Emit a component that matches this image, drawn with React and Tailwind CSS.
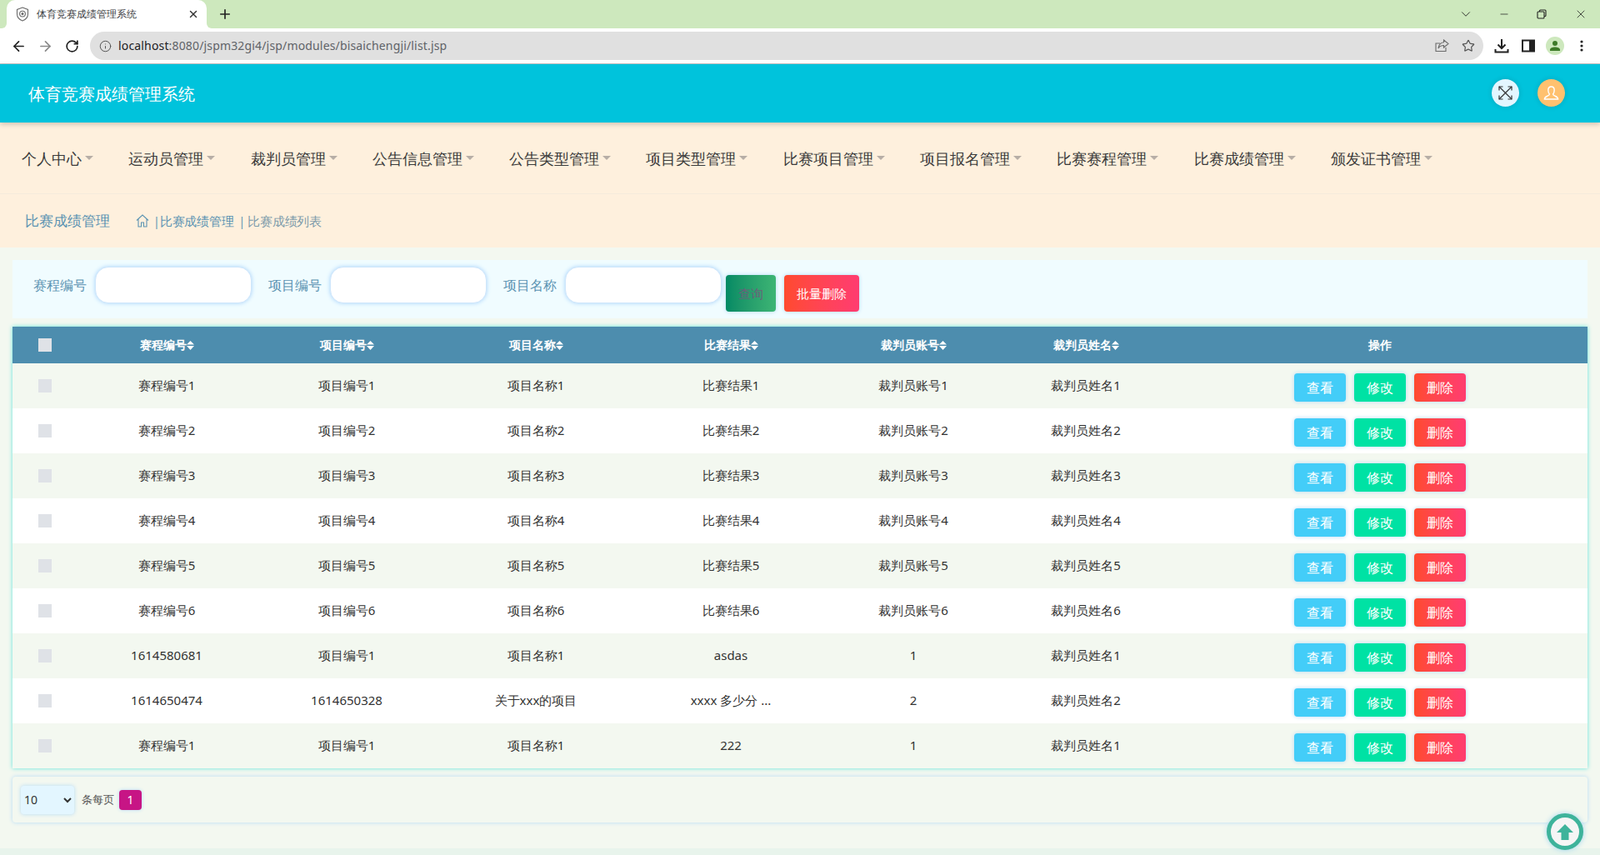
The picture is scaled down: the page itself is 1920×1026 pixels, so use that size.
import React from 'react';
import { ArrowLeft, ArrowRight, RotateCw, Info, Star, Plus, X, ChevronDown, Minus } from 'lucide-react';

const navItems = ['个人中心', '运动员管理', '裁判员管理', '公告信息管理', '公告类型管理', '项目类型管理', '比赛项目管理', '项目报名管理', '比赛赛程管理', '比赛成绩管理', '颁发证书管理'];
const heads = ['赛程编号', '项目编号', '项目名称', '比赛结果', '裁判员账号', '裁判员姓名'];
const rows = [
  ['赛程编号1', '项目编号1', '项目名称1', '比赛结果1', '裁判员账号1', '裁判员姓名1'],
  ['赛程编号2', '项目编号2', '项目名称2', '比赛结果2', '裁判员账号2', '裁判员姓名2'],
  ['赛程编号3', '项目编号3', '项目名称3', '比赛结果3', '裁判员账号3', '裁判员姓名3'],
  ['赛程编号4', '项目编号4', '项目名称4', '比赛结果4', '裁判员账号4', '裁判员姓名4'],
  ['赛程编号5', '项目编号5', '项目名称5', '比赛结果5', '裁判员账号5', '裁判员姓名5'],
  ['赛程编号6', '项目编号6', '项目名称6', '比赛结果6', '裁判员账号6', '裁判员姓名6'],
  ['1614580681', '项目编号1', '项目名称1', 'asdas', '1', '裁判员姓名1'],
  ['1614650474', '1614650328', '关于xxx的项目', 'xxxx 多少分 ...', '2', '裁判员姓名2'],
  ['赛程编号1', '项目编号1', '项目名称1', '222', '1', '裁判员姓名1'],
];

function Sort() {
  return (
    <svg width="9" height="11" viewBox="0 0 9 11" className="inline-block align-[-1px]">
      <polygon points="4.5,0 9,4.6 0,4.6" fill="#fff" />
      <polygon points="0,6 9,6 4.5,11" fill="#fff" />
    </svg>
  );
}

function Field({ label, className }) {
  return (
    <div className={`flex items-start ${className}`}>
      <span className="mr-[10px] text-[16px] leading-[44px] text-[#5b93b2]">{label}</span>
      <input className="h-[44px] w-[188px] rounded-[16px] border border-[#cfe6fb] bg-white shadow-[0_0_5px_#a9d4fb] outline-none" />
    </div>
  );
}

function ActionBtn({ className, children }) {
  return (
    <button className={`h-[34px] w-[62px] rounded-[4px] text-[16px] leading-[34px] text-white shadow-[0_0_5px_#b3d9f5] ${className}`}>{children}</button>
  );
}

export default function App() {
  return (
    <div className="h-[1026px] w-full overflow-hidden bg-[#f3f8f0] text-[#333] font-['Noto_Sans','Noto_Sans_CJK_SC',sans-serif]">
      {/* browser tab strip */}
      <div className="flex h-[34px] items-end bg-[#cde8bd]">
        <div className="h-[34px] w-[8px]" />
        <div className="relative flex h-[34px] w-[240px] items-center rounded-t-[10px] bg-white">
          <span className="absolute bottom-0 left-[-6px] h-[6px] w-[6px] bg-white"><span className="block h-full w-full rounded-br-[6px] bg-[#cde8bd]" /></span>
          <span className="absolute bottom-0 right-[-6px] h-[6px] w-[6px] bg-white"><span className="block h-full w-full rounded-bl-[6px] bg-[#cde8bd]" /></span>
          <svg width="16" height="18" viewBox="0 0 16 18" className="ml-[11px]" fill="none" stroke="#6b6b6b" strokeWidth="1.1">
            <path d="M8 1 L14.5 3.4 V9 C14.5 13 11.5 15.6 8 17 C4.5 15.6 1.5 13 1.5 9 V3.4 Z" />
            <circle cx="8" cy="8.6" r="3.4" />
            <circle cx="8" cy="8.6" r="1" fill="#6b6b6b" />
          </svg>
          <span className="ml-[9px] w-[120px] text-[12px] leading-[34px] text-[#3c4043] whitespace-nowrap">体育竞赛成绩管理系统</span>
          <X size={14} strokeWidth={2.4} className="ml-[61px] text-[#333]" />
        </div>
        <Plus size={18} strokeWidth={2.2} className="mb-[8px] ml-[13px] text-[#222]" />
        <div className="flex-1" />
        <div className="flex h-[34px] items-center text-[#222]">
          <ChevronDown size={18} strokeWidth={1.2} className="mr-[30px]" />
          <Minus size={14} strokeWidth={1.3} className="mr-[32px]" />
          <svg width="12" height="12" viewBox="0 0 12 12" fill="none" stroke="#222" strokeWidth="1.1" className="mr-[33px]">
            <rect x="1" y="3" width="8" height="8" rx="1" />
            <path d="M3.5 3 V2 a1 1 0 0 1 1 -1 H10 a1 1 0 0 1 1 1 V7.5 a1 1 0 0 1 -1 1 H9" />
          </svg>
          <X size={16} strokeWidth={1.2} className="mr-[15px]" />
        </div>
      </div>
      {/* browser toolbar */}
      <div className="flex h-[43px] items-center border-b border-[#c4c6c8] bg-white">
        <ArrowLeft size={19} strokeWidth={2.2} className="ml-[13px] text-[#222]" />
        <ArrowRight size={19} strokeWidth={2.2} className="ml-[13px] text-[#8a8a8a]" />
        <RotateCw size={17} strokeWidth={2.4} className="ml-[14px] text-[#222]" />
        <div className="ml-[13px] flex h-[34px] w-[1672px] items-center rounded-[17px] bg-[#e0e0e0]">
          <Info size={15} strokeWidth={1.6} className="ml-[11px] text-[#555]" />
          <span className="ml-[8px] mt-[-1px] text-[14px] tracking-[0.16px] text-[#5f6368] whitespace-nowrap"><span className="text-[#202124]">localhost</span>:8080/jspm32gi4/jsp/modules/bisaichengji/list.jsp</span>
          <div className="flex-1" />
          <svg width="17" height="16" viewBox="0 0 17 16" fill="none" stroke="#6a6a6a" strokeWidth="1.1" className="mr-[15px]">
            <path d="M13 10 V14.5 H1 V5 H6" />
            <path d="M10.5 1 L16 5.5 L10.5 10 V7.5 C7.5 7.5 5.5 8.5 4 11 C4.5 7 7 4 10.5 3.7 Z" />
          </svg>
          <Star size={16} strokeWidth={1.8} className="mr-[10px] text-[#555]" />
        </div>
        <svg width="18" height="18" viewBox="0 0 18 18" fill="none" stroke="#222" strokeWidth="2" className="ml-[13px]">
          <path d="M9 1 V11.5 M4.5 7.5 L9 12 L13.5 7.5" />
          <path d="M1.5 13 V16.5 H16.5 V13" />
        </svg>
        <svg width="16" height="16" viewBox="0 0 16 16" className="ml-[15px]">
          <rect x="1" y="1.5" width="14" height="13" fill="none" stroke="#222" strokeWidth="2" />
          <rect x="9" y="1.5" width="6" height="13" fill="#222" />
        </svg>
        <div className="ml-[13px] flex h-[22px] w-[22px] items-center justify-center rounded-full bg-[#cde8bd]">
          <svg width="14" height="12" viewBox="0 0 14 12" fill="#3d7a28">
            <circle cx="7" cy="3" r="3" />
            <path d="M1 12 V10.5 C1 8.5 4 7.4 7 7.4 C10 7.4 13 8.5 13 10.5 V12 Z" />
          </svg>
        </div>
        <svg width="4" height="14" viewBox="0 0 4 14" fill="#222" className="ml-[19px]">
          <circle cx="2" cy="2" r="1.6" /><circle cx="2" cy="7" r="1.6" /><circle cx="2" cy="12" r="1.6" />
        </svg>
      </div>
      {/* app header */}
      <header className="relative z-10 flex h-[70px] items-center bg-[#00c3dc] pl-[34px] shadow-[0_2px_6px_rgba(0,0,0,0.2)]">
        <h1 className="mt-[1px] text-[20px] text-white">体育竞赛成绩管理系统</h1>
        <div className="flex-1" />
        <div className="mb-[2px] flex h-[33px] w-[33px] items-center justify-center rounded-full bg-[#e3f6ff] shadow-[0_0_6px_rgba(0,0,0,0.15)]">
          <svg width="17" height="17" viewBox="0 0 17 17" fill="none" stroke="#333" strokeWidth="1.2">
            <path d="M1 1 L16 16 M16 1 L1 16" />
            <path d="M1 5.5 V1 H5.5 M11.5 1 H16 V5.5 M16 11.5 V16 H11.5 M5.5 16 H1 V11.5" />
          </svg>
        </div>
        <div className="mb-[2px] ml-[22px] mr-[42px] flex h-[33px] w-[33px] items-center justify-center rounded-full bg-[#ffc16f] shadow-[0_0_6px_rgba(0,0,0,0.15)]">
          <svg width="19" height="17" viewBox="0 0 19 17" fill="none" stroke="#fff" strokeWidth="1.4">
            <path d="M9.5 1 C12 1 13.2 3 13.2 5.2 C13.2 7.5 12 9.5 11.6 10 C11.6 11.2 12.5 11.6 14 12.2 C16 13 17.6 13.6 17.6 16 H1.4 C1.4 13.6 3 13 5 12.2 C6.5 11.6 7.4 11.2 7.4 10 C7 9.5 5.8 7.5 5.8 5.2 C5.8 3 7 1 9.5 1 Z" />
          </svg>
        </div>
      </header>
      {/* nav */}
      <nav className="flex h-[86px] items-center gap-[42.3px] border-b border-[#f5eadc] bg-[#fef0dd] pl-[26px] pt-[2px]">
        {navItems.map((t) => (
          <div key={t} className="flex items-center whitespace-nowrap">
            <span className="text-[18px] text-[#3a3a3a]">{t}</span>
            <span className="ml-[4px] mt-[-3px] h-0 w-0 border-x-[5px] border-t-[5px] border-x-transparent border-t-[#b7aea6]" />
          </div>
        ))}
      </nav>
      {/* breadcrumb */}
      <div className="flex h-[64px] items-center bg-[#fef0dd] pl-[30px]">
        <span className="w-[133px] text-[17px] text-[#5b93b2]">比赛成绩管理</span>
        <svg width="16" height="16" viewBox="0 0 16 16" fill="none" stroke="#5b93b2" strokeWidth="1.1">
          <path d="M1 7.5 L8 1 L15 7.5 M3 6 V15 H6.5 V10 H9.5 V15 H13 V6" />
        </svg>
        <span className="ml-[5px] text-[14px] text-[#5b93b2]">|</span>
        <span className="text-[15px] tracking-[-0.2px] text-[#5b93b2]">比赛成绩管理</span>
        <span className="ml-[6px] text-[14px] text-[#5b93b2]">|</span>
        <span className="ml-[3px] text-[15px] tracking-[-0.2px] text-[#7b9aaa]">比赛成绩列表</span>
      </div>
      {/* main */}
      <main className="h-[721px] px-[15px] pt-[15px]">
        <div className="flex h-[70px] bg-[#f0fcff] pt-[8px]">
          <Field label="赛程编号" className="ml-[25px]" />
          <Field label="项目编号" className="ml-[20px]" />
          <Field label="项目名称" className="ml-[20px]" />
          <button className="ml-[5px] mt-[10px] h-[44px] w-[60px] rounded-[4px] bg-gradient-to-r from-[#028a64] to-[#3db574] text-[15px] text-[#6b5f7a] shadow-[0_0_5px_#b3d9f5]">查询</button>
          <button className="ml-[10px] mt-[10px] h-[44px] w-[90px] rounded-[4px] bg-gradient-to-r from-[#ff4a2d] to-[#ff3c70] text-[15px] text-white shadow-[0_0_5px_#b3d9f5]">批量删除</button>
        </div>
        <div className="mt-[10px] shadow-[0_0_5px_#5fe3da]">
          <table className="w-full table-fixed border-collapse">
            <colgroup>
              <col className="w-[78px]" />
              <col className="w-[214px]" />
              <col className="w-[218px]" />
              <col className="w-[236px]" />
              <col className="w-[232px]" />
              <col className="w-[206px]" />
              <col className="w-[208px]" />
              <col className="w-[498px]" />
            </colgroup>
            <thead>
              <tr className="h-[44px] bg-[#4d8dae]">
                <th className="p-0"><span className="mx-auto block h-[16px] w-[16px] bg-[#dfe2e7]" /></th>
                {heads.map((h) => (
                  <th key={h} className="p-0 pb-[2px] text-[14px] font-bold text-white">{h}<Sort /></th>
                ))}
                <th className="p-0 pb-[2px] text-[14px] font-bold text-white">操作</th>
              </tr>
            </thead>
            <tbody>
              {rows.map((r, i) => (
                <tr key={i} className={`h-[54px] ${i % 2 === 0 ? 'bg-[#f3f8f0]' : 'bg-white'}`}>
                  <td className="p-0"><span className="mx-auto block h-[16px] w-[16px] bg-[#dfe2e7]" /></td>
                  {r.map((c, j) => (
                    <td key={j} className="p-0 pb-[1px] text-center text-[15px] text-[#333]">{c}</td>
                  ))}
                  <td className="p-0">
                    <div className="flex justify-center gap-[10px] pt-[4px]">
                      <ActionBtn className="bg-[#43cdf8]">查看</ActionBtn>
                      <ActionBtn className="bg-[#00e2a4]">修改</ActionBtn>
                      <ActionBtn className="bg-gradient-to-r from-[#ff4a2d] to-[#ff3c70]">删除</ActionBtn>
                    </div>
                  </td>
                </tr>
              ))}
            </tbody>
          </table>
        </div>
        <div className="mt-[10px] flex h-[55px] items-center rounded-[4px] bg-[#f3f8f0] pl-[10px] shadow-[0_0_5px_#b3d9f5]">
          <select className="h-[34px] w-[64px] rounded-[4px] bg-[#e3f6ff] text-[14px] text-[#333] shadow-[0_0_5px_#b3d9f5] outline-none">
            <option>10</option>
          </select>
          <span className="ml-[9px] text-[13px] text-[#555]">条每页</span>
          <span className="ml-[6px] flex h-[24px] w-[27px] items-center justify-center rounded-[4px] bg-[#c71585] text-[14px] text-white shadow-[0_0_4px_#b3d9f5]">1</span>
        </div>
      </main>
      <div className="relative h-[8px] bg-[#e8f4ec]" />
      {/* back to top */}
      <div className="fixed left-[1856px] top-[976px] flex h-[44px] w-[44px] items-center justify-center rounded-full border-[5px] border-[#3eb39b] bg-[#f5f5f5] shadow-[0_0_6px_#9fd4ee]">
        <svg width="20" height="19" viewBox="0 0 20 19" fill="#3eb39b">
          <path d="M10 0 L20 10 H14.5 V19 H5.5 V10 H0 Z" />
        </svg>
      </div>
    </div>
  );
}
